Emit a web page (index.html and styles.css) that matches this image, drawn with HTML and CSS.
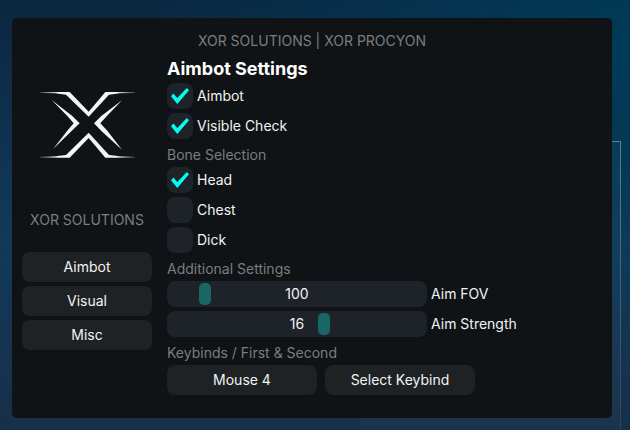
FILE: index.html
```html
<!DOCTYPE html>
<html lang="en">
<head>
<meta charset="utf-8">
<title>XOR SOLUTIONS | XOR PROCYON</title>
<link rel="stylesheet" href="styles.css">
</head>
<body>
<div class="panel">
  <header class="panel-header">XOR SOLUTIONS | XOR PROCYON</header>
  <div class="columns">
    <aside class="sidebar">
      <svg class="logo" viewBox="30 38 285 198" aria-hidden="true">
        <defs>
          <linearGradient id="fade" gradientUnits="userSpaceOnUse" x1="30" y1="0" x2="315" y2="0">
            <stop offset="0" stop-color="#f4f6f6" stop-opacity=".2"/>
            <stop offset=".2" stop-color="#f4f6f6"/>
            <stop offset=".8" stop-color="#f4f6f6"/>
            <stop offset="1" stop-color="#f4f6f6" stop-opacity=".2"/>
          </linearGradient>
        </defs>
        <path fill="url(#fade)" d="M30 38H119L176 97 226 38H315V41L270 42 237 46 176 112 108 46 75 42 30 41Z"/>
        <path fill="url(#fade)" d="M30 235H119L176 176 226 235H315V232L270 231 237 227 176 160 108 227 75 231 30 232Z"/>
        <path d="M65 62 126 109 149 132 124 156 70 208 113 153 131 132 112 110Z"/>
        <path d="M276 63 214 110 192 132 214 155 276 211 232 154 211 132 230 111Z"/>
      </svg>
      <p class="brand">XOR SOLUTIONS</p>
      <nav class="tabs">
        <button class="button" type="button">Aimbot</button>
        <button class="button" type="button">Visual</button>
        <button class="button" type="button">Misc</button>
      </nav>
    </aside>
    <main class="settings">
      <h1 class="title">Aimbot Settings</h1>
      <label class="check"><input type="checkbox" checked>Aimbot</label>
      <label class="check"><input type="checkbox" checked>Visible Check</label>
      <h2 class="section">Bone Selection</h2>
      <label class="check"><input type="checkbox" checked>Head</label>
      <label class="check"><input type="checkbox">Chest</label>
      <label class="check"><input type="checkbox">Dick</label>
      <h2 class="section">Additional Settings</h2>
      <div class="slider-row">
        <div class="slider">
          <input id="fov" type="range" min="0" max="820" value="100">
          <output class="value" for="fov">100</output>
        </div>
        <label for="fov">Aim FOV</label>
      </div>
      <div class="slider-row">
        <div class="slider">
          <input id="strength" type="range" min="2" max="25" value="16">
          <output class="value" for="strength">16</output>
        </div>
        <label for="strength">Aim Strength</label>
      </div>
      <h2 class="section">Keybinds / First &amp; Second</h2>
      <div class="keybinds">
        <button class="button" type="button">Mouse 4</button>
        <button class="button" type="button">Select Keybind</button>
      </div>
    </main>
  </div>
</div>
</body>
</html>
```
FILE: styles.css
```css
* {
  box-sizing: border-box;
}

body {
  margin: 0;
  min-height: 100vh;
  padding: 18px 18px 12px 12px;
  display: flex;
  position: relative;
  font: 400 14px/20px Inter, "Open Sans", sans-serif;
  color: #f2f2f2;
  background:
    radial-gradient(ellipse at 100% 12%, #003b58 0, transparent 55%),
    linear-gradient(#0b2740, #12395a 55%, #172f49);
}

/* Thin outline of the window behind the panel */
body::before {
  content: "";
  position: absolute;
  inset: 141px 9px 0 57%;
  border: solid #4b7184;
  border-width: 1px 1px 0 0;
  border-image: linear-gradient(#5b8090, #24475d) 1;
  background: #ffffff06;
}

.panel {
  position: relative;
  flex: 1;
  padding: 13px 10px 23px;
  border-radius: 5px;
  background: #0f1315;
}

.panel-header {
  margin-bottom: 8px;
  text-align: center;
  color: #7c7d7e;
}

.columns {
  display: grid;
  grid-template-columns: 130px 1fr;
  gap: 15px;
}

.sidebar {
  display: flex;
  flex-direction: column;
  padding-top: 33px;
}

.logo {
  width: 95px;
  height: 66px;
  margin: 0 auto;
  fill: #f4f6f6;
}

.brand {
  margin: 52px 0 22px;
  text-align: center;
  color: #7c7d7e;
}

.tabs,
.settings {
  display: flex;
  flex-direction: column;
  gap: 4px;
}

.button {
  height: 30px;
  padding: 0;
  border: 0;
  border-radius: 8px;
  background: #1e2224;
  color: inherit;
  font: inherit;
}

.title {
  margin: 0;
  font-size: 18px;
  line-height: 20px;
  font-weight: 700;
  color: #fff;
}

.section {
  margin: 0;
  padding-top: 4px;
  font-size: 14px;
  line-height: 16px;
  font-weight: 400;
  color: #7c7d7e;
}

.check {
  display: flex;
  align-items: center;
  align-self: flex-start;
  gap: 4px;
}

.check input {
  appearance: none;
  display: grid;
  place-items: center;
  width: 26px;
  height: 26px;
  margin: 0;
  border-radius: 8px;
  background: #1d2329;
}

.check input:checked::before {
  content: "";
  width: 18px;
  height: 16px;
  background: #00fff0;
  clip-path: polygon(0 52%, 13% 34%, 35% 62%, 88% 0, 100% 14%, 35% 100%);
}

.slider-row {
  display: flex;
  align-items: center;
  gap: 4px;
}

.slider {
  display: grid;
  width: 260px;
}

.slider > * {
  grid-area: 1 / 1;
}

.slider input {
  appearance: none;
  width: 100%;
  height: 26px;
  margin: 0;
  padding: 0 2px;
  border-radius: 8px;
  background: #1d2329;
}

.slider input::-webkit-slider-thumb {
  appearance: none;
  width: 12px;
  height: 22px;
  border-radius: 5px;
  background: #196765;
}

.value {
  place-self: center;
  pointer-events: none;
}

.keybinds {
  display: grid;
  grid-template-columns: 150px 150px;
  gap: 8px;
}
```
